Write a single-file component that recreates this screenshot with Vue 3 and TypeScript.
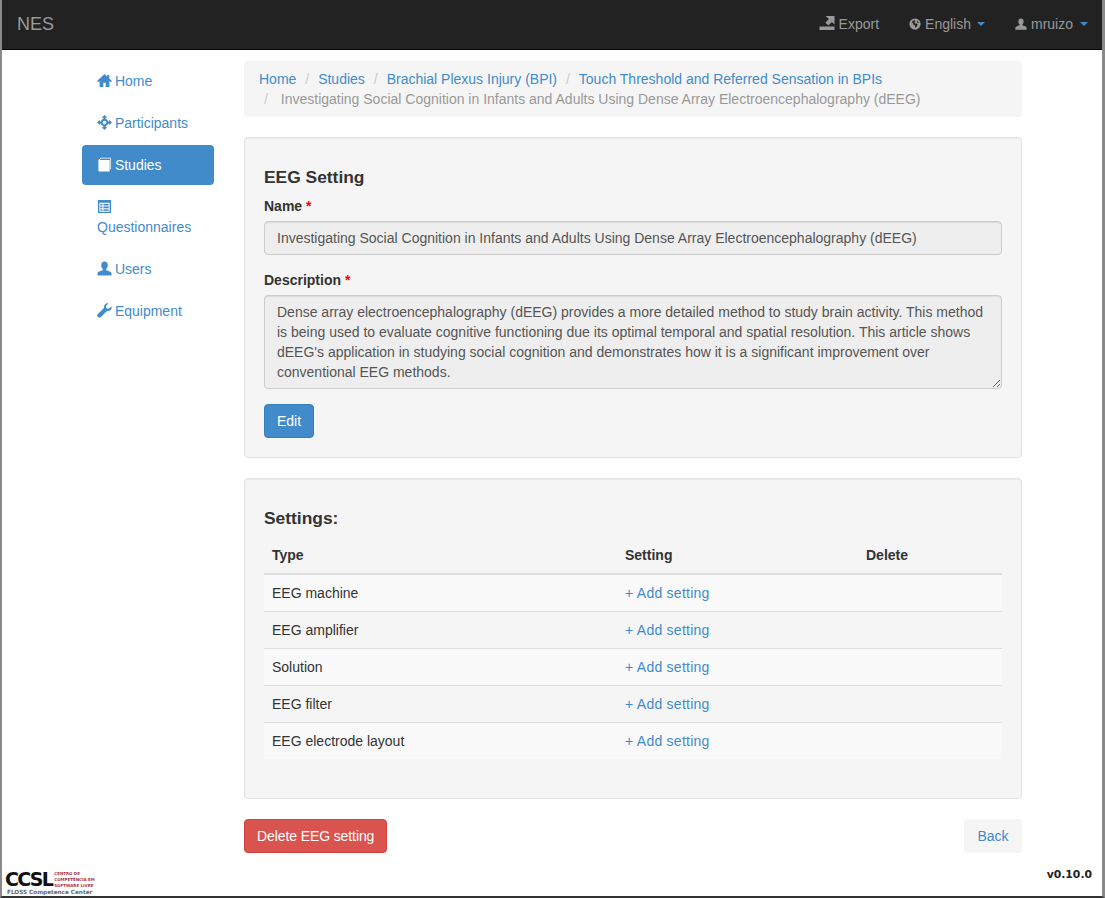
<script setup lang="ts">
interface Crumb { label: string }
const crumbs: Crumb[] = [
  { label: 'Home' },
  { label: 'Studies' },
  { label: 'Brachial Plexus Injury (BPI)' },
  { label: 'Touch Threshold and Referred Sensation in BPIs' },
]
const title = 'Investigating Social Cognition in Infants and Adults Using Dense Array Electroencephalography (dEEG)'
const description =
  "Dense array electroencephalography (dEEG) provides a more detailed method to study brain activity. This method is being used to evaluate cognitive functioning due its optimal temporal and spatial resolution. This article shows dEEG's application in studying social cognition and demonstrates how it is a significant improvement over conventional EEG methods."
const rows: string[] = ['EEG machine', 'EEG amplifier', 'Solution', 'EEG filter', 'EEG electrode layout']
</script>

<template>
  <div class="window">
    <header class="navbar">
      <a class="brand">NES</a>
      <nav class="nav-right">
        <a class="nav-link export">
          <svg class="ico ico-export" viewBox="0 0 16 16"><path d="M0.500 11.500h15V15H0.500z" /><path d="M6.500 1h9v8.500l-2.600-2.600-3.600 3.600-2.900-2.900 3.600-3.600z" /></svg>
          Export
        </a>
        <a class="nav-link english">
          <svg class="ico" viewBox="0 0 16 16"><path fill-rule="evenodd" d="M8 .5a7.500 7.500 0 1 0 0 15A7.500 7.500 0 0 0 8 .5zM5 3.500 7.500 3l1 1.500-1.500 1 1 1.500 2.500.5 1 1.500-1.500 3-1.500 1-.5-3-2-1-.5-2-1.500-1zM11 3.500l1.500 1.500.5 2-1.500-.5-1-1.500z" /></svg>
          English <span class="caret tight"></span>
        </a>
        <a class="nav-link user">
          <svg class="ico" viewBox="0 0 16 16"><path d="M8 .5c2.200 0 3.500 1.700 3.500 4 0 1.700-.7 3.200-1.700 4.100v1.200c2.100.8 5.700 1.400 5.700 3.200v2.500H.500V13c0-1.800 3.600-2.400 5.700-3.200V8.600C5.200 7.700 4.500 6.200 4.500 4.500c0-2.300 1.300-4 3.500-4z" /></svg>
          mruizo <span class="caret"></span>
        </a>
      </nav>
    </header>

    <div class="body">
      <aside class="sidebar">
        <a class="pill">
          <svg class="ico" viewBox="0 0 16 16"><path d="M8 1 0 8.500 1.400 9.800 2.800 8.600V15h3.900v-4.500h2.600V15h3.900V8.600l1.400 1.200L16 8.500l-2.900-2.700V2h-2.200v1.800z" /></svg>
          Home
        </a>
        <a class="pill">
          <svg class="ico" viewBox="0 0 16 16"><path fill-rule="evenodd" d="M8 0 11 3H9.200V4.100A4 4 0 0 1 11.900 6.800H13V5l3 3-3 3V9.200H11.900A4 4 0 0 1 9.200 11.900V13H11l-3 3-3-3H6.800V11.900A4 4 0 0 1 4.100 9.200H3V11L0 8l3-3V6.800H4.100A4 4 0 0 1 6.800 4.100V3H5zM8 6a2 2 0 1 0 0 4 2 2 0 0 0 0-4z" /></svg>
          Participants
        </a>
        <a class="pill active">
          <svg class="ico" viewBox="0 0 16 16"><path d="M1.500 3.200 4 .8H15V13H14.200V1.700H4.400L3 3.200H13.500V15.500H2.500C1.900 15.500 1.500 15.100 1.500 14.500z" /></svg>
          Studies
        </a>
        <a class="pill">
          <svg class="ico" viewBox="0 0 16 16"><path fill-rule="evenodd" d="M1 1h14v14H1zM2.500 4v9.500h11V4zM3.500 5.200h2.200v1.800H3.500zM6.800 5.200h5.700v1.800H6.800zM3.500 8h2.200v1.800H3.500zM6.800 8h5.700v1.800H6.800zM3.500 10.800h2.200v1.800H3.500zM6.800 10.800h5.700v1.800H6.800z" /></svg>
          <br />Questionnaires
        </a>
        <a class="pill">
          <svg class="ico" viewBox="0 0 16 16"><path d="M8 .5c2.200 0 3.500 1.700 3.500 4 0 1.700-.7 3.200-1.700 4.100v1.200c2.100.8 5.700 1.400 5.700 3.200v2.500H.500V13c0-1.800 3.600-2.400 5.700-3.200V8.600C5.200 7.700 4.500 6.200 4.500 4.500c0-2.300 1.300-4 3.500-4z" /></svg>
          Users
        </a>
        <a class="pill">
          <svg class="ico" viewBox="0 0 16 16"><path d="M15.600 3.800c.3 1.400-.1 2.800-1.100 3.700-1 .9-2.300 1.200-3.600.8L4 15.300c-.7.700-1.800.7-2.500 0l-.8-.8c-.7-.7-.7-1.800 0-2.500l7-6.900c-.4-1.300-.1-2.600.8-3.600 1-1 2.300-1.400 3.700-1.100L9.500 3.200l.5 2.300 2.300.5z" /></svg>
          Equipment
        </a>
      </aside>

      <main class="main">
        <ol class="breadcrumb">
          <li v-for="c in crumbs" :key="c.label" class="crumb"><a>{{ c.label }}</a></li>
          <li class="crumb current">{{ title }}</li>
        </ol>

        <section class="well">
          <h4 class="heading">EEG Setting</h4>
          <div class="field">
            <label>Name <span class="req">*</span></label>
            <input class="control" type="text" disabled :value="title" />
          </div>
          <div class="field">
            <label>Description <span class="req">*</span></label>
            <textarea class="control area" disabled :value="description"></textarea>
          </div>
          <button class="btn primary">Edit</button>
        </section>

        <section class="well">
          <h4 class="heading">Settings:</h4>
          <table class="table">
            <thead>
              <tr>
                <th class="col-type">Type</th>
                <th class="col-setting">Setting</th>
                <th>Delete</th>
              </tr>
            </thead>
            <tbody>
              <tr v-for="r in rows" :key="r">
                <td>{{ r }}</td>
                <td><a class="add">+ Add setting</a></td>
                <td></td>
              </tr>
            </tbody>
          </table>
        </section>

        <div class="actions">
          <button class="btn danger">Delete EEG setting</button>
          <button class="btn plain">Back</button>
        </div>
      </main>
    </div>

    <footer class="footer">
      <div class="logo">
        <div class="logo-top">
          <span class="logo-mark">CCSL</span>
          <span class="logo-red">CENTRO DE<br />COMPETÊNCIA EM<br />SOFTWARE LIVRE</span>
        </div>
        <div class="logo-sub">FLOSS Competence Center</div>
      </div>
      <div class="version">v0.10.0</div>
    </footer>
  </div>
</template>

<style>
html, body { margin: 0; background: #fff; }
</style>

<style scoped>
.window {
  box-sizing: border-box;
  width: 1105px;
  height: 898px;
  overflow: hidden;
  display: flex;
  flex-direction: column;
  background: #fff;
  border-left: 2px solid #8a8a8a;
  border-right: 3px solid #8a8a8a;
  border-bottom: 2px solid #333;
  font: 14px/20px "Liberation Sans", Arial, sans-serif;
  color: #333;
}
a { color: #428bca; text-decoration: none; }

.navbar {
  flex: none;
  box-sizing: border-box;
  height: 50px;
  display: flex;
  align-items: center;
  justify-content: space-between;
  background: #222;
  border-bottom: 1px solid #080808;
  padding: 0 14px 2px 15px;
}
.brand { font-size: 18px; color: #999; }
.nav-right { display: flex; gap: 30px; align-items: center; }
.nav-link { color: #999; display: flex; align-items: center; gap: 4px; }
.nav-link .ico { fill: #999; width: 12px; height: 14px; }
.nav-link .ico-export { width: 16px; height: 16px; margin-top: -2px; }
.caret {
  display: inline-block;
  width: 0;
  height: 0;
  margin-left: 3px;
  border-top: 4px solid #428bca;
  border-left: 4px solid transparent;
  border-right: 4px solid transparent;
}
.caret.tight { margin-left: 2px; }

.body { flex: 1; display: flex; min-height: 0; padding-top: 11px; }
.sidebar {
  box-sizing: border-box;
  margin-left: 80px;
  width: 132px;
  flex: none;
  display: flex;
  flex-direction: column;
  gap: 2px;
}
.pill {
  display: block;
  padding: 10px 15px;
  border-radius: 4px;
  color: #428bca;
}
.pill .ico {
  width: 15px;
  height: 15px;
  margin-right: -1px;
  fill: #428bca;
  vertical-align: -2px;
}
.pill.active { background: #428bca; color: #fff; }
.pill.active .ico { fill: #fff; }

.main { margin-left: 30px; width: 778px; flex: none; }

.breadcrumb {
  list-style: none;
  display: flex;
  flex-wrap: wrap;
  margin: 0 0 20px;
  padding: 8px 15px;
  background: #f5f5f5;
  border-radius: 4px;
}
.crumb + .crumb { margin-left: 4px; }
.crumb + .crumb::before {
  content: "/\00a0";
  padding: 0 5px;
  color: #ccc;
}
.crumb.current { color: #999; margin-left: 0; }
.crumb.current::before { padding-right: 9px; }

.well {
  box-sizing: border-box;
  background: #f5f5f5;
  border: 1px solid #e3e3e3;
  border-radius: 4px;
  padding: 19px;
  margin-bottom: 20px;
  box-shadow: inset 0 1px 1px rgba(0, 0, 0, 0.05);
}
.heading {
  margin: 10px 0 9px;
  font-size: 17.400px;
  line-height: 20px;
  font-weight: bold;
}
.field { margin-bottom: 15px; }
label { display: block; font-weight: bold; margin-bottom: 5px; }
.req { color: #f00; }
.control {
  display: block;
  box-sizing: border-box;
  width: 100%;
  height: 34px;
  padding: 6px 12px;
  font: inherit;
  color: #555;
  background: #eee;
  border: 1px solid #ccc;
  border-radius: 4px;
  box-shadow: inset 0 1px 1px rgba(0, 0, 0, 0.075);
  opacity: 1;
  -webkit-text-fill-color: #555;
}
.area { height: 94px; resize: both; overflow: hidden; }

.btn {
  display: inline-block;
  box-sizing: border-box;
  height: 34px;
  padding: 6px 12px;
  font: inherit;
  border: 1px solid transparent;
  border-radius: 4px;
}
.primary { background: #428bca; border-color: #357ebd; color: #fff; }
.danger { background: #d9534f; border-color: #d43f3a; color: #fff; letter-spacing: -0.100px; }
.plain { background: #f5f5f5; color: #428bca; min-width: 58px; }

.table {
  width: 100%;
  border-collapse: separate;
  border-spacing: 0;
  table-layout: fixed;
  margin-bottom: 20px;
}
.col-type { width: 353px; }
.col-setting { width: 241px; }
.table th {
  box-sizing: border-box;
  text-align: left;
  padding: 8px;
  border-bottom: 2px solid #ddd;
}
.table td {
  box-sizing: border-box;
  padding: 8px;
  height: 37px;
  border-top: 1px solid #ddd;
}
.table tbody tr:first-child td { border-top: 0; height: 36px; }
.table tbody tr:nth-child(odd) { background: #f9f9f9; }
.add { letter-spacing: 0.250px; }

.actions { display: flex; justify-content: space-between; }

.footer {
  flex: none;
  display: flex;
  justify-content: space-between;
  align-items: flex-start;
  height: 27px;
  padding-left: 3px;
  padding-right: 10px;
}
.logo { width: 92px; margin-top: 2px; line-height: 1; }
.logo-top { display: flex; align-items: flex-start; gap: 1px; height: 17px; }
.logo-mark {
  font: bold 19px/17px "DejaVu Sans", sans-serif;
  color: #111;
  letter-spacing: -1.700px;
}
.logo-red {
  font: bold 4px/6px "DejaVu Sans", sans-serif;
  color: #b03040;
  white-space: nowrap;
  margin-left: 1px;
}
.logo-sub {
  font: bold 5.700px/6px "DejaVu Sans", sans-serif;
  color: #666;
  white-space: nowrap;
  margin: 1px 0 0 2px;
}
.version {
  font: bold 10.800px/14px "DejaVu Sans", sans-serif;
  color: #222;
  margin-top: -1px;
}
</style>
